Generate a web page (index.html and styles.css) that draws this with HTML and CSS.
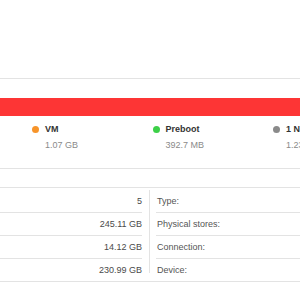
FILE: index.html
```html
<!DOCTYPE html>
<html lang="en">
<head>
  <meta charset="UTF-8">
  <title>Disk Utility</title>
  <link rel="stylesheet" href="styles.css">
</head>
<body>
  <header class="toolbar"></header>

  <section class="usage">
    <div class="usage-bar"></div>
    <div class="legend">
      <div class="legend-item">
        <div class="legend-name"><span class="dot dot-vm"></span>VM</div>
        <div class="legend-size">1.07 GB</div>
      </div>
      <div class="legend-item">
        <div class="legend-name"><span class="dot dot-preboot"></span>Preboot</div>
        <div class="legend-size">392.7 MB</div>
      </div>
      <div class="legend-item">
        <div class="legend-name"><span class="dot dot-other"></span>1 Not Mounted</div>
        <div class="legend-size">1.23 GB</div>
      </div>
    </div>
  </section>

  <section class="info">
    <div class="info-col info-left">
      <div class="info-row"><span class="info-value">5</span></div>
      <div class="info-row"><span class="info-value">245.11 GB</span></div>
      <div class="info-row"><span class="info-value">14.12 GB</span></div>
      <div class="info-row"><span class="info-value">230.99 GB</span></div>
    </div>
    <div class="info-divider"></div>
    <div class="info-col info-right">
      <div class="info-row"><span class="info-label">Type:</span></div>
      <div class="info-row"><span class="info-label">Physical stores:</span></div>
      <div class="info-row"><span class="info-label">Connection:</span></div>
      <div class="info-row"><span class="info-label">Device:</span></div>
    </div>
  </section>
</body>
</html>
```

FILE: styles.css
```css
body {
  margin: 0;
  padding: 0;
  background-color: #ffffff;
  font-family: 'Liberation Sans', Arial, sans-serif;
  color: #3c3c3c;
  overflow: hidden;
}

.toolbar {
  height: 78px;
  border-bottom: 1px solid #e3e3e3;
}

.usage {
  padding: 19px 0 17px;
  border-bottom: 1px solid #e3e3e3;
}

.usage-bar {
  height: 18px;
  background-color: #fd3535;
}

.legend {
  display: flex;
  padding-left: 32px;
  margin-top: 7px;
  white-space: nowrap;
  overflow: hidden;
}

.legend-item {
  flex: 0 0 120.5px;
}

.legend-name {
  display: flex;
  align-items: center;
  height: 12px;
  font-size: 9px;
  font-weight: bold;
  color: #333;
}

.dot {
  width: 7px;
  height: 7px;
  border-radius: 50%;
  margin-right: 6px;
}

.dot-vm {
  background-color: #f7942a;
}

.dot-preboot {
  background-color: #3dd048;
}

.dot-other {
  background-color: #8a8a8a;
}

.legend-size {
  margin-top: 4px;
  padding-left: 13px;
  height: 12px;
  line-height: 12px;
  font-size: 9px;
  color: #8a8a8a;
}

.info {
  display: flex;
  margin-top: 18px;
  padding-top: 2px;
  border-top: 1px solid #e3e3e3;
  border-bottom: 1px solid #e3e3e3;
  font-size: 9px;
}

.info-left {
  width: 142px;
  text-align: right;
}

.info-right {
  flex: 1;
}

.info-divider {
  width: 1px;
  margin: 0 6px 8px 7px;
  background-color: #e3e3e3;
}

.info-row {
  height: 22px;
  line-height: 22px;
  border-bottom: 1px solid #e3e3e3;
}

.info-row:last-child {
  border-bottom: none;
}

.info-value {
  color: #4a4a4a;
}

.info-label {
  padding-left: 1px;
  color: #555;
}
```
